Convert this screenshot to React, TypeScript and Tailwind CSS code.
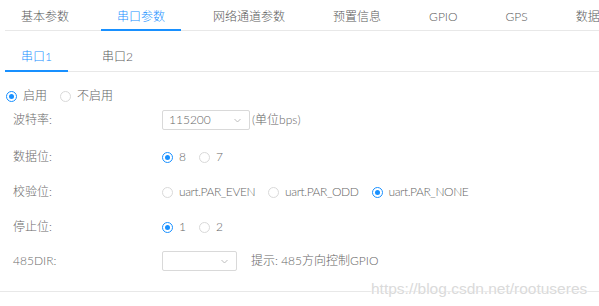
import React from "react";

function Radio({ checked, label, tight }: { checked?: boolean; label: string; tight?: boolean }) {
  return (
    <span className="flex items-center mr-[13px]">
      <span
        className={
          "w-[11px] h-[11px] rounded-full border flex items-center justify-center bg-white " +
          (checked ? "border-[#1890ff]" : "border-[#d9d9d9]")
        }
      >
        {checked && <span className="w-[5px] h-[5px] rounded-full bg-[#1890ff]" />}
      </span>
      <span className={"ml-[6px] text-[#666] leading-4 " + (tight ? "tracking-[-0.4px]" : "")}>{label}</span>
    </span>
  );
}

function Chevron() {
  return (
    <svg width="7" height="5" viewBox="0 0 7 5" className="block">
      <polyline points="0.5,1 3.5,4 6.5,1" fill="none" stroke="#bdbdbd" strokeWidth="1" />
    </svg>
  );
}

function Row({ label, mt, children }: { label: string; mt: string; children: React.ReactNode }) {
  return (
    <div className={"flex items-center h-[20px] " + mt}>
      <div className="w-[157px] shrink-0 pl-[8px] text-[#6b6b6b] leading-4">{label}</div>
      <div className="flex items-center">{children}</div>
    </div>
  );
}

export default function App() {
  const tabs = ["基本参数", "串口参数", "网络通道参数", "预置信息", "GPIO", "GPS", "数据通道"];
  return (
    <div className="relative w-[599px] h-[306px] overflow-hidden bg-white text-[12px] font-light font-['Lato','Noto_Sans_CJK_SC',sans-serif]">
      <div className="pl-[5px]">
        <div className="flex border-b border-[#e8e8e8] whitespace-nowrap">
          {tabs.map((t, i) => (
            <div
              key={t}
              className={
                "shrink-0 px-4 pt-[9px] pb-[4px] leading-4 border-b-2 -mb-px mr-[16px] " +
                (i === 1 ? "border-[#1890ff] text-[#1890ff]" : "border-transparent text-[#5a5a5a]")
              }
            >
              {t}
            </div>
          ))}
        </div>

        <div className="flex border-b border-[#e8e8e8] mt-[10px]">
          <div className="px-4 pt-[8px] pb-[5px] leading-4 border-b-2 -mb-px mr-[18px] border-[#1890ff] text-[#1890ff]">
            串口1
          </div>
          <div className="px-4 pt-[8px] pb-[5px] leading-4 border-b-2 -mb-px border-transparent text-[#5a5a5a]">
            串口2
          </div>
        </div>

        <div className="flex items-center h-[20px] mt-[14px] pl-[1px]">
          <Radio checked label="启用" />
          <Radio label="不启用" />
        </div>

        <Row label="波特率:" mt="mt-[4px]">
          <div className="w-[88px] h-[20px] border border-[#d9d9d9] rounded-[2px] flex items-center justify-between pl-[6px] pr-[8px]">
            <span className="text-[#666] leading-4">115200</span>
            <Chevron />
          </div>
          <span className="ml-[2px] text-[#666] leading-4">(单位bps)</span>
        </Row>

        <Row label="数据位:" mt="mt-[17px]">
          <Radio checked label="8" />
          <Radio label="7" />
        </Row>

        <Row label="校验位:" mt="mt-[15px]">
          <Radio tight label="uart.PAR_EVEN" />
          <Radio tight label="uart.PAR_ODD" />
          <Radio tight checked label="uart.PAR_NONE" />
        </Row>

        <Row label="停止位:" mt="mt-[15px]">
          <Radio checked label="1" />
          <Radio label="2" />
        </Row>

        <Row label="485DIR:" mt="mt-[14px]">
          <div className="w-[75px] h-[20px] border border-[#d9d9d9] rounded-[2px] flex items-center justify-end pr-[8px]">
            <Chevron />
          </div>
          <span className="ml-[14px] text-[#666] leading-4">提示: 485方向控制GPIO</span>
        </Row>
      </div>

      <div className="mt-[20px] border-t border-[#e8e8e8]" />

      <div className="absolute left-[371px] top-[280px] text-[15.5px] leading-[18px] font-normal text-[#dadada] font-['Liberation_Sans',sans-serif] [text-shadow:0_0_2px_#fff,0_0_2px_#fff]">
        https://blog.csdn.net/rootuseres
      </div>
    </div>
  );
}
